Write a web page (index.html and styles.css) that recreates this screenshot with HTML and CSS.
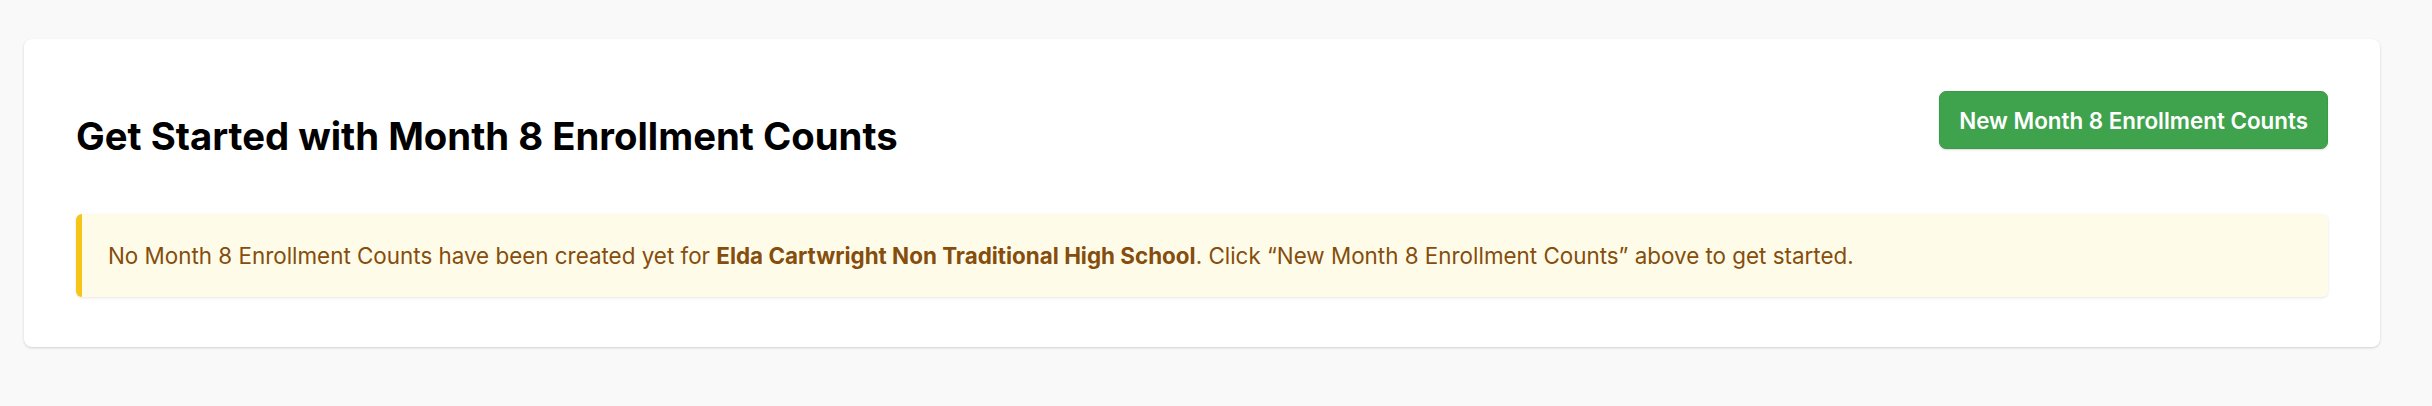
FILE: index.html
```html
<!DOCTYPE html>
<html lang="en">
<head>
<meta charset="utf-8">
<title>Month 8 Enrollment Counts</title>
<link rel="stylesheet" href="styles.css">
</head>
<body>
  <main class="page">
    <section class="card">
      <div class="card-header">
        <h1 class="title">Get Started with Month 8 Enrollment Counts</h1>
        <button class="btn-primary" type="button">New Month 8 Enrollment Counts</button>
      </div>
      <div class="alert">
        No Month 8 Enrollment Counts have been created yet for <strong>Elda Cartwright Non Traditional High School</strong>. Click “New Month 8 Enrollment Counts” above to get started.
      </div>
    </section>
  </main>
</body>
</html>
```

FILE: styles.css
```css
* { box-sizing: border-box; }
html, body { margin: 0; padding: 0; }
body {
  background: #f9f9f9;
  font-family: Inter, "Noto Sans", "Liberation Sans", sans-serif;
  color: #000;
  height: 406px;
}
.page {
  padding: 39px 52px 0 24px;
}
.card {
  background: #fff;
  border-radius: 8px;
  box-shadow: 0 1px 3px rgba(0,0,0,0.12), 0 1px 2px rgba(0,0,0,0.05);
  padding: 52px 52px 50px 52px;
}
.card-header {
  display: flex;
  justify-content: space-between;
  align-items: flex-start;
}
.title {
  margin: 21px 0 0 0;
  font-size: 38.3px;
  line-height: 48px;
  font-weight: 700;
}
.btn-primary {
  font-family: inherit;
  font-size: 22.4px;
  line-height: 33px;
  font-weight: 600;
  color: #fff;
  background: #3fa34d;
  border: 1px solid #3a9a47;
  border-radius: 7px;
  padding: 12px 19px;
  height: 58px;
  box-shadow: 0 1px 2px rgba(0,0,0,0.15);
  cursor: pointer;
}
.alert {
  margin-top: 54px;
  background: #fefce8;
  border-left: 6px solid #f5c518;
  border-radius: 6px;
  box-shadow: 0 1px 3px rgba(0,0,0,0.1);
  color: #854d0e;
  font-size: 22.4px;
  line-height: 33px;
  padding: 25px 26px;
}
.alert strong { font-weight: 700; }
```
